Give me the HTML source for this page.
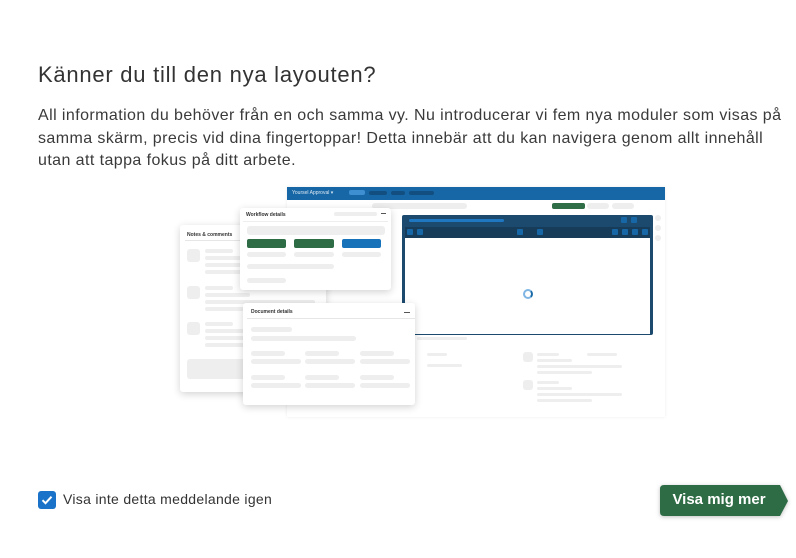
<!DOCTYPE html>
<html><head><style>
*{margin:0;padding:0;box-sizing:border-box}
body{width:796px;height:558px;background:#fff;font-family:"Liberation Sans",sans-serif;color:#333;position:relative;overflow:hidden}
.a{position:absolute}
.g{position:absolute;background:#eeeeee;border-radius:3px}
.card{position:absolute;background:#fff;border-radius:3px;box-shadow:0 2px 8px rgba(0,0,0,.18)}
.t{position:absolute;font-size:5px;font-weight:bold;color:#333}
.d{position:absolute;width:6px;height:6px;background:#1767a6;border-radius:1px}
</style></head><body>
<div class="a" style="left:38px;top:62px;font-size:22px;letter-spacing:0.75px;color:#333;white-space:nowrap">Känner du till den nya layouten?</div>
<div class="a" style="left:38px;top:105px;width:760px;font-size:16px;letter-spacing:0.42px;line-height:22.5px;color:#3a3a3a">All information du behöver från en och samma vy. Nu introducerar vi fem nya moduler som visas på<br>samma skärm, precis vid dina fingertoppar! Detta innebär att du kan navigera genom allt innehåll<br>utan att tappa fokus på ditt arbete.</div>

<!-- app window -->
<div class="a" style="left:287px;top:187px;width:378px;height:230px;background:#fff;box-shadow:0 0 3px rgba(0,0,0,.08)">
 <div class="a" style="left:0;top:0;width:378px;height:13px;background:#1767a6"></div>
 <div class="a" style="left:5px;top:3px;font-size:5px;color:#dbe7f2">Yoursel Approval ▾</div>
 <div class="a" style="left:62px;top:3px;width:16px;height:5px;background:#3d8fd1;border-radius:2px"></div>
 <div class="a" style="left:82px;top:4px;width:18px;height:4px;background:#124f80;border-radius:2px"></div>
 <div class="a" style="left:104px;top:4px;width:14px;height:4px;background:#124f80;border-radius:2px"></div>
 <div class="a" style="left:122px;top:4px;width:25px;height:4px;background:#124f80;border-radius:2px"></div>
 <div class="g" style="left:85px;top:16px;width:95px;height:6px"></div>
 <div class="a" style="left:265px;top:16px;width:33px;height:6px;background:#2f6e46;border-radius:2px"></div>
 <div class="g" style="left:300px;top:16px;width:22px;height:6px"></div>
 <div class="g" style="left:325px;top:16px;width:22px;height:6px"></div>
 <div class="a" style="left:115px;top:28px;width:251px;height:120px;background:#1c4a6e;border-radius:2px"></div>
 <div class="a" style="left:118px;top:40px;width:245px;height:11px;background:#163c5a"></div>
 <div class="a" style="left:122px;top:32px;width:95px;height:3px;background:#1f77c2;border-radius:2px"></div>
 <div class="d" style="left:334px;top:30px"></div><div class="d" style="left:344px;top:30px"></div>
 <div class="d" style="left:120px;top:42px"></div><div class="d" style="left:130px;top:42px"></div>
 <div class="d" style="left:230px;top:42px"></div><div class="d" style="left:250px;top:42px"></div>
 <div class="d" style="left:325px;top:42px"></div><div class="d" style="left:335px;top:42px"></div><div class="d" style="left:345px;top:42px"></div><div class="d" style="left:355px;top:42px"></div>
 <div class="a" style="left:118px;top:51px;width:245px;height:96px;background:#fff"></div>
 <div class="a" style="left:236px;top:102px;width:10px;height:10px;border:2px solid #7fb6e4;border-right-color:#1a6aa8;border-radius:50%"></div>
 <div class="g" style="left:130px;top:150px;width:50px;height:3px"></div>
 <div class="g" style="left:368px;top:28px;width:6px;height:6px"></div>
 <div class="g" style="left:368px;top:38px;width:6px;height:6px"></div>
 <div class="g" style="left:368px;top:48px;width:6px;height:6px"></div>
 <div class="g" style="left:140px;top:166px;width:20px;height:3px"></div>
 <div class="g" style="left:140px;top:177px;width:35px;height:3px"></div>
 <div class="g" style="left:250px;top:166px;width:22px;height:3px"></div>
 <div class="g" style="left:250px;top:172px;width:35px;height:3px"></div>
 <div class="g" style="left:250px;top:178px;width:85px;height:3px"></div>
 <div class="g" style="left:250px;top:184px;width:55px;height:3px"></div>
 <div class="g" style="left:300px;top:166px;width:30px;height:3px"></div>
 <div class="g" style="left:250px;top:194px;width:22px;height:3px"></div>
 <div class="g" style="left:250px;top:200px;width:35px;height:3px"></div>
 <div class="g" style="left:250px;top:206px;width:85px;height:3px"></div>
 <div class="g" style="left:250px;top:212px;width:55px;height:3px"></div>
 <div class="g" style="left:236px;top:165px;width:10px;height:10px"></div>
 <div class="g" style="left:236px;top:193px;width:10px;height:10px"></div>
</div>

<!-- notes card -->
<div class="card" style="left:180px;top:225px;width:146px;height:167px">
 <div class="t" style="left:7px;top:7px">Notes &amp; comments</div>
 <div class="a" style="left:5px;top:15px;width:140px;height:1px;background:#e6e6e6"></div>
 <div class="g" style="left:7px;top:24px;width:13px;height:13px"></div>
 <div class="g" style="left:25px;top:24px;width:28px;height:4px"></div>
 <div class="g" style="left:25px;top:31px;width:45px;height:4px"></div>
 <div class="g" style="left:25px;top:38px;width:50px;height:4px"></div>
 <div class="g" style="left:25px;top:45px;width:50px;height:4px"></div>
 <div class="g" style="left:7px;top:61px;width:13px;height:13px"></div>
 <div class="g" style="left:25px;top:61px;width:28px;height:4px"></div>
 <div class="g" style="left:25px;top:68px;width:45px;height:4px"></div>
 <div class="g" style="left:25px;top:75px;width:110px;height:4px"></div>
 <div class="g" style="left:25px;top:82px;width:70px;height:4px"></div>
 <div class="g" style="left:7px;top:97px;width:13px;height:13px"></div>
 <div class="g" style="left:25px;top:97px;width:28px;height:4px"></div>
 <div class="g" style="left:25px;top:104px;width:45px;height:4px"></div>
 <div class="g" style="left:25px;top:111px;width:50px;height:4px"></div>
 <div class="g" style="left:25px;top:118px;width:50px;height:4px"></div>
 <div class="g" style="left:7px;top:134px;width:134px;height:20px"></div>
</div>

<!-- workflow card -->
<div class="card" style="left:240px;top:208px;width:151px;height:82px">
 <div class="t" style="left:6px;top:4px">Workflow details</div>
 <div class="g" style="left:94px;top:4px;width:43px;height:4px"></div>
 <div class="a" style="left:141px;top:5px;width:5px;height:1px;background:#555"></div>
 <div class="a" style="left:3px;top:13px;width:145px;height:1px;background:#eee"></div>
 <div class="g" style="left:7px;top:18px;width:138px;height:9px"></div>
 <div class="a" style="left:7px;top:31px;width:39px;height:9px;background:#2e6c45;border-radius:2px"></div>
 <div class="a" style="left:54px;top:31px;width:40px;height:9px;background:#2e6c45;border-radius:2px"></div>
 <div class="a" style="left:102px;top:31px;width:39px;height:9px;background:#1872ba;border-radius:2px"></div>
 <div class="g" style="left:7px;top:44px;width:39px;height:5px"></div>
 <div class="g" style="left:54px;top:44px;width:40px;height:5px"></div>
 <div class="g" style="left:102px;top:44px;width:39px;height:5px"></div>
 <div class="g" style="left:7px;top:56px;width:87px;height:5px"></div>
 <div class="g" style="left:7px;top:70px;width:39px;height:5px"></div>
</div>

<!-- document card -->
<div class="card" style="left:243px;top:303px;width:172px;height:102px">
 <div class="t" style="left:8px;top:6px">Document details</div>
 <div class="a" style="left:161px;top:9px;width:6px;height:1px;background:#555"></div>
 <div class="a" style="left:4px;top:15px;width:168px;height:1px;background:#e6e6e6"></div>
 <div class="g" style="left:8px;top:24px;width:41px;height:5px"></div>
 <div class="g" style="left:8px;top:33px;width:105px;height:5px"></div>
 <div class="g" style="left:8px;top:48px;width:34px;height:5px"></div>
 <div class="g" style="left:8px;top:56px;width:50px;height:5px"></div>
 <div class="g" style="left:62px;top:48px;width:34px;height:5px"></div>
 <div class="g" style="left:62px;top:56px;width:50px;height:5px"></div>
 <div class="g" style="left:117px;top:48px;width:34px;height:5px"></div>
 <div class="g" style="left:117px;top:56px;width:50px;height:5px"></div>
 <div class="g" style="left:8px;top:72px;width:34px;height:5px"></div>
 <div class="g" style="left:8px;top:80px;width:50px;height:5px"></div>
 <div class="g" style="left:62px;top:72px;width:34px;height:5px"></div>
 <div class="g" style="left:62px;top:80px;width:50px;height:5px"></div>
 <div class="g" style="left:117px;top:72px;width:34px;height:5px"></div>
 <div class="g" style="left:117px;top:80px;width:50px;height:5px"></div>
</div>

<!-- footer -->
<div class="a" style="left:38px;top:491px;width:18px;height:18px;background:#1a73c8;border-radius:3px">
 <svg width="18" height="18" viewBox="0 0 18 18"><path d="M4.5 9.2l3 3 6-6.5" stroke="#fff" stroke-width="2" fill="none"/></svg>
</div>
<div class="a" style="left:63px;top:491px;font-size:14px;letter-spacing:0.3px;color:#333">Visa inte detta meddelande igen</div>
<svg class="a" style="left:658px;top:484px;filter:drop-shadow(0 1px 2px rgba(0,0,0,.25))" width="134" height="34" viewBox="0 0 134 34"><path d="M6 1H122L130 17 122 32H6Q2 32 2 28V5Q2 1 6 1Z" fill="#2e6c45"/></svg>
<div class="a" style="left:660px;top:491px;width:118px;text-align:center;font-size:15px;font-weight:bold;color:#fff">Visa mig mer</div>
</body></html>
